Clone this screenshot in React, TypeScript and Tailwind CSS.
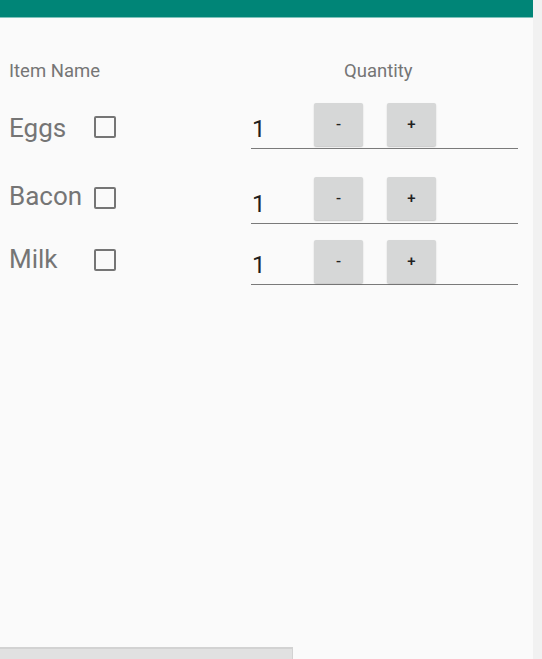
const items = [
  { name: "Eggs", height: "h-[46px]", gap: "mt-0", nameTop: "mt-[12px]", boxTop: "mt-[13px]", qtyTop: "mt-[14px]" },
  { name: "Bacon", height: "h-[47px]", gap: "mt-[28px]", nameTop: "mt-[6px]", boxTop: "mt-[10px]", qtyTop: "mt-[15px]" },
  { name: "Milk", height: "h-[45px]", gap: "mt-[16px]", nameTop: "mt-[6px]", boxTop: "mt-[9px]", qtyTop: "mt-[13px]" },
];

function StepButton({ label }: { label: string }) {
  return (
    <button
      type="button"
      className="flex h-[43px] w-[49px] items-center justify-center rounded-[2px] bg-[#d6d7d7] text-[15px] font-medium leading-none text-[#222] shadow-[0_1px_1.5px_rgba(0,0,0,0.22)]"
    >
      {label}
    </button>
  );
}

export default function App() {
  return (
    <div className="flex h-[659px] w-[542px] bg-[#f1f1f1] font-['Roboto',sans-serif]">
      <div className="flex w-[533px] flex-col bg-[#fafafa]">
        <div className="h-[18px] border-b border-[#7fc2bb] bg-[#008577]" />

        <div className="flex h-[85px] pt-[44px] text-[18.5px] leading-[18px] text-[#757575]">
          <span className="w-[344px] pl-[9px]">Item Name</span>
          <span>Quantity</span>
        </div>

        {items.map((item) => (
          <div key={item.name} className={`flex ${item.height} ${item.gap}`}>
            <div className="flex w-[251px] items-start">
              <span className={`w-[94px] pl-[9px] text-[26px] leading-[26px] text-[#757575] ${item.nameTop}`}>{item.name}</span>
              <span className={`h-[22px] w-[22px] rounded-[2px] border-2 border-[#757575] ${item.boxTop}`} />
            </div>
            <div className="flex w-[267px] items-start border-b border-[#7a7a7a]">
              <span className={`w-[63px] pl-[1px] text-[24px] leading-[24px] text-[#1f1f1f] ${item.qtyTop}`}>1</span>
              <StepButton label="-" />
              <span className="w-[24px]" />
              <StepButton label="+" />
            </div>
          </div>
        ))}

        <div className="mt-auto h-[12px] w-[293px] border-t-2 border-r border-[#d2d2d2] bg-[#e1e1e1]" />
      </div>
    </div>
  );
}
